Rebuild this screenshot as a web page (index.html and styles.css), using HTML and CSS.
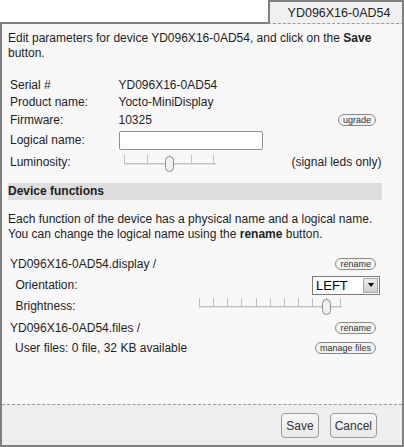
FILE: index.html
```html
<!DOCTYPE html>
<html>
<head>
<meta charset="utf-8">
<link rel="stylesheet" href="styles.css">
</head>
<body>
<div class="tabbar">
  <div class="tabspace"></div>
  <div class="tab">YD096X16-0AD54</div>
</div>
<div class="panel">
  <div class="content">
    <p class="intro"><span class="line">Edit parameters for device YD096X16-0AD54, and click on the <b>Save</b></span><span class="line">button.</span></p>
    <div class="info">
      <div class="lbl">Serial #</div><div class="val">YD096X16-0AD54</div>
      <div class="lbl">Product name:</div><div class="val">Yocto-MiniDisplay</div>
      <div class="lbl">Firmware:</div><div class="val split"><span>10325</span><button class="mini fw">ugrade</button></div>
      <div class="lbl">Logical name:</div><div class="val"><div class="input"></div></div>
      <div class="lbl">Luminosity:</div>
      <div class="val lum">
        <svg class="slider-lum" width="96" height="18" viewBox="0 0 96 18">
          <path d="M2 8.5H94" stroke="#c2c2c2" stroke-width="1"/>
          <path d="M2 9.5H94" stroke="#e2e2e2" stroke-width="1"/>
          <path d="M2.5 0V9M25.5 0V9M47.5 0V9M69.5 0V9M91.5 0V9" stroke="#c2c2c2" stroke-width="1"/>
          <rect x="43.5" y="1.5" width="8" height="15" rx="4" fill="#f1f1f1" stroke="#8e8e8e"/>
        </svg>
        <span class="note">(signal leds only)</span>
      </div>
    </div>
    <div class="section">Device functions</div>
    <p class="para"><span class="line">Each function of the device has a physical name and a logical name.</span><span class="line">You can change the logical name using the <b>rename</b> button.</span></p>
    <div class="funcs">
      <div class="frow r-fn"><span>YD096X16-0AD54.display /</span><button class="mini">rename</button></div>
      <div class="frow r-sub r-orient"><span>Orientation:</span>
        <div class="select"><span class="seltext">LEFT</span><span class="selarrow"><span class="tri"></span></span></div>
      </div>
      <div class="frow r-sub r-bright"><span>Brightness:</span>
        <svg class="slider-bri" width="146" height="18" viewBox="0 0 146 18">
          <path d="M2 8.5H145" stroke="#c2c2c2" stroke-width="1"/>
          <path d="M2 9.5H145" stroke="#e2e2e2" stroke-width="1"/>
          <path d="M2.5 0V9M16.5 0V9M30.5 0V9M44.5 0V9M59.5 0V9M73.5 0V9M87.5 0V9M101.5 0V9M115.5 0V9M129.5 0V9M143.5 0V9" stroke="#c2c2c2" stroke-width="1"/>
          <rect x="125.5" y="1.5" width="8" height="15" rx="4" fill="#f1f1f1" stroke="#8e8e8e"/>
        </svg>
      </div>
      <div class="frow r-fn r-files"><span>YD096X16-0AD54.files /</span><button class="mini">rename</button></div>
      <div class="frow r-sub r-user"><span>User files: 0 file, 32 KB available</span><button class="mini">manage files</button></div>
    </div>
  </div>
  <div class="footer">
    <button class="btn">Save</button>
    <button class="btn">Cancel</button>
  </div>
</div>
</body>
</html>
```
FILE: styles.css
```css
body {
  margin: 0;
  width: 404px;
  background: #ffffff;
  font-family: "Liberation Sans", Arial, sans-serif;
  font-size: 12px;
  color: #1e1e1e;
}

.tabbar {
  display: flex;
  height: 24px;
}

.tabspace {
  flex: 1;
  border-bottom: 2px solid #808080;
}

.tab {
  width: 136px;
  height: 24px;
  box-sizing: border-box;
  border: 2px solid #808080;
  border-bottom: 1px dashed #9a9a9a;
  background: #f0f0f0;
  text-align: center;
  font-size: 12.5px;
  line-height: 21px;
  padding-left: 6px;
  padding-top: 1px;
}

.panel {
  border: 2px solid #808080;
  border-top: none;
  background: #f8f8f8;
}

.content {
  height: 380px;
  box-sizing: border-box;
  padding: 7px 20px 0 6px;
}

.intro,
.para {
  margin: 0 -12px 0 0;
  line-height: 15px;
}

.line {
  display: block;
  white-space: nowrap;
}

.info {
  margin-top: 16px;
  display: grid;
  grid-template-columns: 110.5px 1fr;
  grid-template-rows: 16px 18px 18px 22px 21px;
  align-items: center;
}

.lbl {
  padding-left: 2px;
}

.split {
  display: flex;
  justify-content: space-between;
  align-items: center;
}

.fw {
  margin-top: 2px;
}

.input {
  width: 144px;
  height: 19px;
  box-sizing: border-box;
  border: 1px solid #8f8f8f;
  border-radius: 2px;
  background: #ffffff;
}

.lum {
  display: flex;
  align-self: stretch;
  align-items: center;
}

.slider-lum {
  display: block;
  align-self: flex-start;
  margin-top: 4px;
  margin-left: 3.5px;
}

.note {
  margin-left: auto;
  margin-right: 0.5px;
}

.section {
  margin-top: 11px;
  height: 17px;
  line-height: 17px;
  background: #dddddd;
  font-weight: bold;
}

.para {
  margin-top: 12px;
}

.funcs {
  margin-top: 14px;
}

.frow {
  display: flex;
  align-items: center;
  justify-content: space-between;
}

.r-fn {
  height: 16px;
  padding-left: 2px;
}

.r-sub {
  padding-left: 7.5px;
}

.r-orient {
  margin-top: 2px;
  height: 22px;
}

.r-bright {
  height: 20px;
}

.r-files,
.r-user {
  margin-top: 4px;
}

.r-user {
  height: 16px;
  padding-left: 7px;
}

.mini {
  height: 12px;
  box-sizing: border-box;
  padding: 0 4px;
  margin: 0 6px 0 0;
  border: 1px solid #8a8a8a;
  border-radius: 6px;
  background: #f2f2f2;
  color: #333333;
  font-family: "Liberation Sans", Arial, sans-serif;
  font-size: 9px;
  line-height: 10px;
}

.select {
  width: 68px;
  height: 19px;
  box-sizing: border-box;
  margin-right: 2px;
  border: 1px solid #7a7a7a;
  background: #ffffff;
  display: flex;
  align-items: center;
  justify-content: space-between;
}

.seltext {
  padding-left: 3px;
  font-size: 13px;
  color: #000000;
}

.selarrow {
  width: 15px;
  height: 15px;
  box-sizing: border-box;
  margin-right: 1px;
  border: 1px solid #a8a8a8;
  background: linear-gradient(#ececec, #cfcfcf);
  display: flex;
  align-items: center;
  justify-content: center;
}

.tri {
  width: 0;
  height: 0;
  border-left: 3.5px solid transparent;
  border-right: 3.5px solid transparent;
  border-top: 4px solid #000000;
}

.slider-bri {
  display: block;
  align-self: flex-end;
  margin-left: auto;
  margin-right: 39px;
}

.footer {
  height: 41px;
  box-sizing: border-box;
  border-top: 1px dashed #9a9a9a;
  background: #eeeeee;
  display: flex;
  justify-content: flex-end;
  align-items: flex-start;
  gap: 11px;
  padding: 8px 25px 0 0;
}

.btn {
  height: 25px;
  box-sizing: border-box;
  padding: 0 4px;
  border: 1px solid #9a9a9a;
  border-radius: 4px;
  background: linear-gradient(#f7f7f7, #e9e9e9);
  color: #333333;
  font-family: "Liberation Sans", Arial, sans-serif;
  font-size: 12px;
}
```
